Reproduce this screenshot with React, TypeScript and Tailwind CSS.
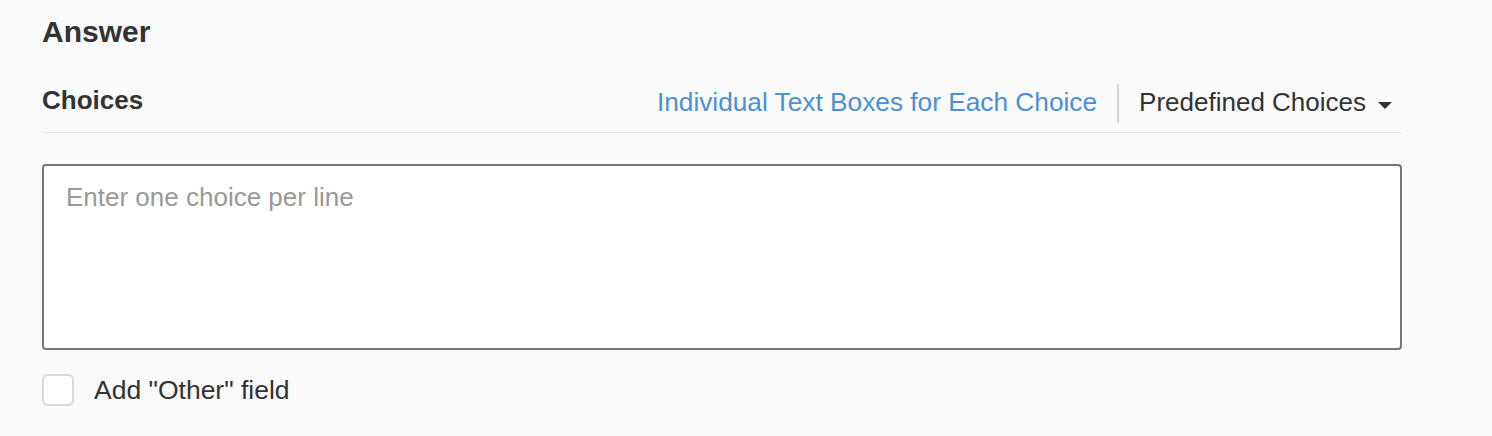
const App = () => {
  return (
    <div className="min-h-[436px] w-full bg-[#fafafa] font-['Liberation_Sans',Arial,sans-serif] text-[#333]">
      <div className="ml-[42px] w-[1360px] pt-[17px]">
        <h2 className="text-[30px] font-bold leading-[30px]">Answer</h2>

        <section className="mt-[37px] flex h-[49px] items-start justify-between border-b border-[#e6e6e6]">
          <h3 className="mt-[3px] text-[26px] font-bold leading-[26px]">Choices</h3>
          <div className="flex items-start">
            <a href="#" className="mt-[5px] text-[26.25px] leading-[26px] text-[#4a90d9]">
              Individual Text Boxes for Each Choice
            </a>
            <span className="mx-[20px] h-[39px] w-[2px] bg-[#d6d6d6]"></span>
            <button className="mt-[5px] mr-[10px] flex items-start text-[26px] leading-[26px] text-[#333]">
              Predefined Choices
              <span className="mt-[13px] ml-[12px] h-0 w-0 border-x-[7.5px] border-t-[7px] border-x-transparent border-t-[#333]"></span>
            </button>
          </div>
        </section>

        <textarea
          placeholder="Enter one choice per line"
          className="mt-[31px] block h-[186px] w-full resize-none rounded-[4px] border-2 border-[#777] bg-white px-[22px] pt-[13px] text-[26px] leading-[37px] text-[#333] outline-none placeholder:text-[#999]"
        />

        <label className="mt-[24px] flex items-center gap-[20px]">
          <span className="h-[32px] w-[32px] rounded-[6px] border-2 border-[#d9d9d9] bg-white"></span>
          <span className="text-[26.5px] leading-[32px]">Add "Other" field</span>
        </label>
      </div>
    </div>
  );
};

export default App;
